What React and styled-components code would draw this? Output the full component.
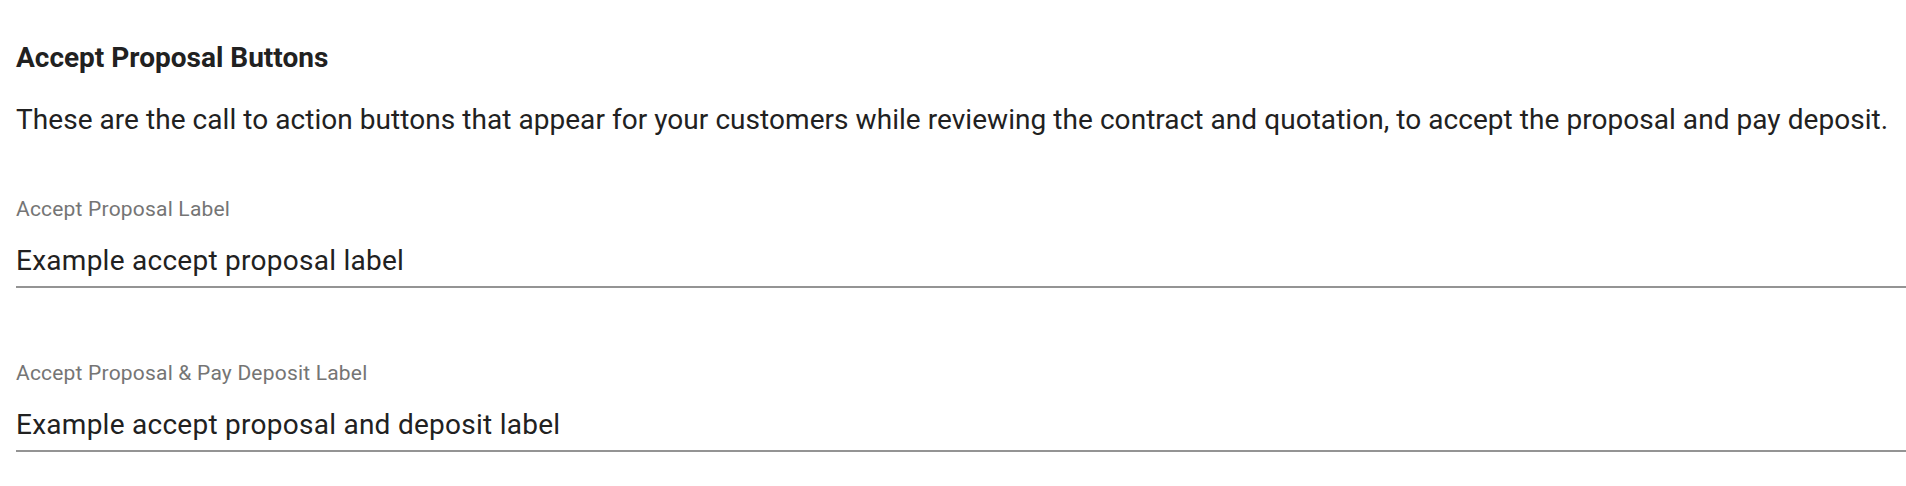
import React from "react";
import styled, { createGlobalStyle } from "styled-components";

const GlobalStyle = createGlobalStyle`
  html, body {
    margin: 0;
    padding: 0;
    background: #ffffff;
  }
  body {
    font-family: Roboto, "Liberation Sans", Arial, sans-serif;
    -webkit-font-smoothing: antialiased;
  }
  * { box-sizing: border-box; }
`;

const Page = styled.section`
  padding: 39.5px 0 0 16px;
  font-family: Roboto, "Liberation Sans", Arial, sans-serif;
`;

const Title = styled.h2`
  margin: 0;
  font-size: 28px;
  line-height: 36px;
  font-weight: 700;
  color: #212121;
`;

const Description = styled.p`
  margin: 24.5px 0 0;
  font-size: 28px;
  line-height: 39px;
  font-weight: 400;
  letter-spacing: 0.05px;
  color: #212121;
  white-space: nowrap;
`;

const Fields = styled.div`
  margin-top: 57.5px;
  display: flex;
  flex-direction: column;
  gap: 73px;
`;

const Field = styled.label`
  display: flex;
  flex-direction: column;
`;

const FieldLabel = styled.span`
  font-size: 21px;
  line-height: 24px;
  letter-spacing: 0.2px;
  color: #757575;
`;

const InputRow = styled.div`
  margin-top: 20px;
  padding-bottom: 5px;
  border-bottom: 2px solid #949494;
`;

const TextInput = styled.input`
  display: block;
  width: 100%;
  height: 40px;
  padding: 0;
  margin: 0;
  border: none;
  outline: none;
  background: transparent;
  font-family: Roboto, "Liberation Sans", Arial, sans-serif;
  font-size: 28px;
  line-height: 40px;
  letter-spacing: 0.26px;
  color: #212121;
`;

const fields = [
  { label: "Accept Proposal Label", value: "Example accept proposal label" },
  {
    label: "Accept Proposal & Pay Deposit Label",
    value: "Example accept proposal and deposit label",
  },
];

export default function App() {
  return (
    <>
      <GlobalStyle />
      <Page>
        <Title>Accept Proposal Buttons</Title>
        <Description>
          These are the call to action buttons that appear for your customers
          while reviewing the contract and quotation, to accept the proposal and
          pay deposit.
        </Description>
        <Fields>
          {fields.map((f) => (
            <Field key={f.label}>
              <FieldLabel>{f.label}</FieldLabel>
              <InputRow>
                <TextInput readOnly defaultValue={f.value} />
              </InputRow>
            </Field>
          ))}
        </Fields>
      </Page>
    </>
  );
}
